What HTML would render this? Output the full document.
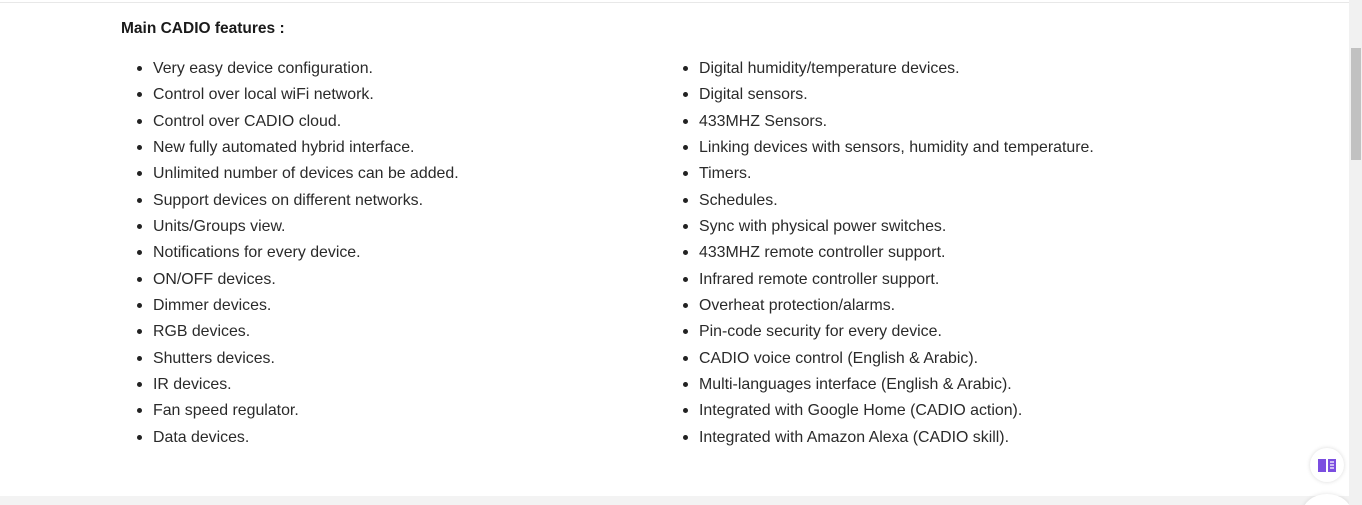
<!DOCTYPE html>
<html><head><style>
html,body{margin:0;width:1362px;height:505px;overflow:hidden}
body{background:#fff;font-family:"Liberation Sans",sans-serif;color:#2a2a2a;position:relative}
.top{position:absolute;left:0;top:0;width:1349px;height:2px;border-bottom:1px solid #e8e8e8}
h3{position:absolute;left:121px;top:20px;margin:0;font-size:15.5px;font-weight:bold;color:#1a1a1a}
ul{position:absolute;margin:0;padding:0;list-style:none;font-size:15.9px;top:59px}
li{height:26.35px;line-height:20px;position:relative;white-space:nowrap}
li:before{content:"";position:absolute;left:-16px;top:7px;width:5px;height:5px;border-radius:50%;background:#222}
.sb{position:absolute;left:1349px;top:0;width:13px;height:505px;background:#f1f1f1}
.th{position:absolute;left:2px;top:48px;width:10px;height:112px;background:#c1c1c1}
.bot{position:absolute;left:0;top:496px;width:1349px;height:9px;background:#f3f3f3}
.btn{position:absolute;left:1310px;top:448px;width:34px;height:34px;border-radius:50%;background:#fff;box-shadow:0 0 4px rgba(0,0,0,.15)}
.clip{position:absolute;left:1290px;top:488px;width:59px;height:17px;overflow:hidden}
.btn2{position:absolute;left:12px;top:6px;width:50px;height:40px;border-radius:50%;background:#fff;box-shadow:0 0 4px rgba(0,0,0,.12)}
</style></head><body>
<div class="top"></div>
<h3>Main CADIO features :</h3>
<ul style="left:153px">
<li>Very easy device configuration.</li><li>Control over local wiFi network.</li><li>Control over CADIO cloud.</li><li>New fully automated hybrid interface.</li><li>Unlimited number of devices can be added.</li><li>Support devices on different networks.</li><li>Units/Groups view.</li><li>Notifications for every device.</li><li>ON/OFF devices.</li><li>Dimmer devices.</li><li>RGB devices.</li><li>Shutters devices.</li><li>IR devices.</li><li>Fan speed regulator.</li><li>Data devices.</li>
</ul>
<ul style="left:699px">
<li>Digital humidity/temperature devices.</li><li>Digital sensors.</li><li>433MHZ Sensors.</li><li>Linking devices with sensors, humidity and temperature.</li><li>Timers.</li><li>Schedules.</li><li>Sync with physical power switches.</li><li>433MHZ remote controller support.</li><li>Infrared remote controller support.</li><li>Overheat protection/alarms.</li><li>Pin-code security for every device.</li><li>CADIO voice control (English &amp; Arabic).</li><li>Multi-languages interface (English &amp; Arabic).</li><li>Integrated with Google Home (CADIO action).</li><li>Integrated with Amazon Alexa (CADIO skill).</li>
</ul>
<div class="bot"></div>
<div class="btn"><svg width="34" height="34" viewBox="0 0 34 34"><path d="M8 11h8v13H8z" fill="#7b4ee0"/><path d="M18 11h8v13h-8z" fill="#7b4ee0"/><path d="M20 14h4M20 17h4M20 20h4" stroke="#fff" stroke-width="1.2"/></svg></div>
<div class="clip"><div class="btn2"></div></div>
<div class="sb"><div class="th"></div></div>
</body></html>
